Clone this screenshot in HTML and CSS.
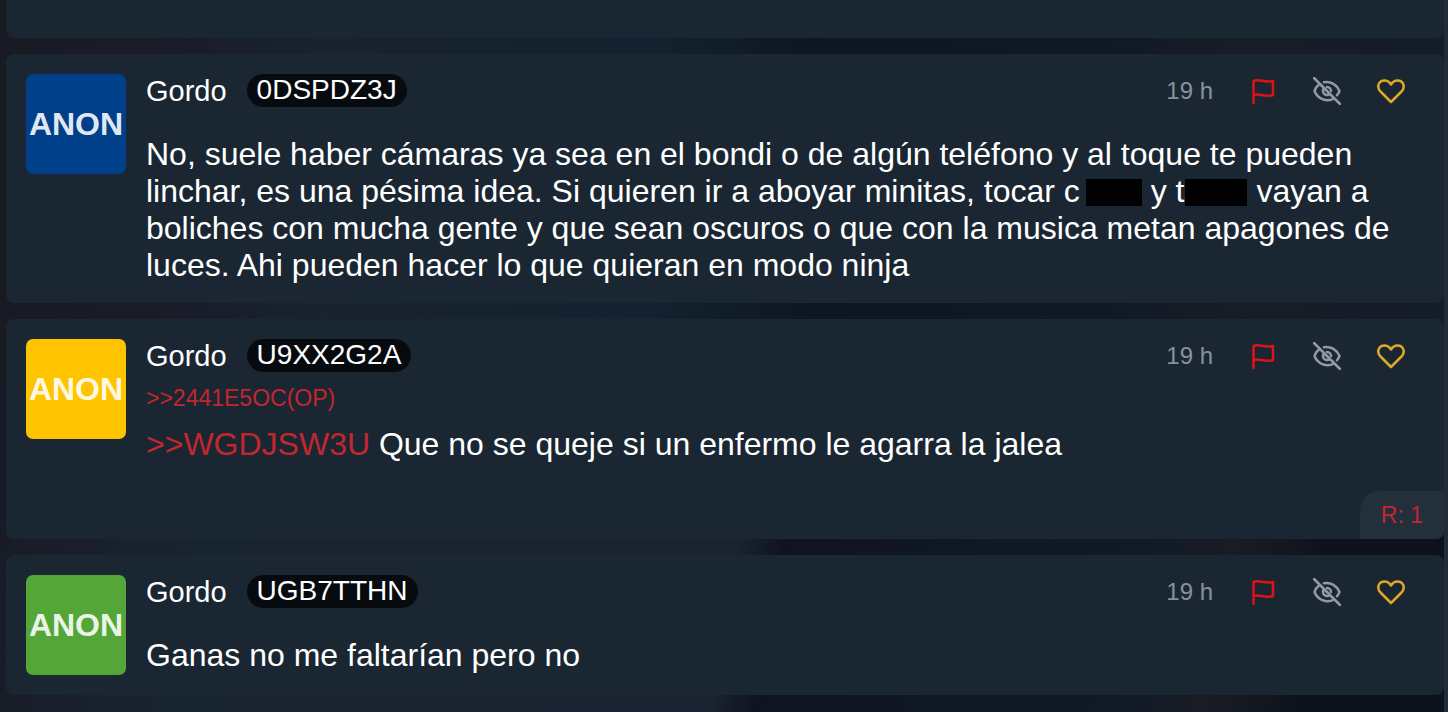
FILE: index.html
```html
<!DOCTYPE html>
<html lang="es">
<head>
<meta charset="UTF-8">
<meta name="viewport" content="width=device-width, initial-scale=1.0">
<title>Comentarios</title>
<link rel="stylesheet" href="styles.css">
</head>
<body>

<!-- Shared icons -->
<svg class="sprite" aria-hidden="true">
    <symbol id="flag" viewBox="0 0 28 28">
        <path d="M4.500 26V4C9.500 1 15.500 6.500 24 4V18C15.500 21 9.500 15.500 4.500 18"/>
    </symbol>
    <symbol id="hide" viewBox="0 0 28 28">
        <path d="M1 1L27 27M11 5.200C18 4 24 8 26.500 14C25.900 15.600 25 17 24 18.200M6 7.500C4 9 2.300 11.300 1.500 14C5 22.500 14 25.500 21 21.500M10.800 11.500C8.500 15 11.500 19.200 16 17.500M14 10C16.500 10 18 12 18 14"/>
    </symbol>
    <symbol id="heart" viewBox="0 0 28 28">
        <path d="M14 25L3.500 14.500C-1 9.500 2 3.500 7.500 3.500C10.500 3.500 12.500 5 14 7.500C15.500 5 17.500 3.500 20.500 3.500C26 3.500 29 9.500 24.500 14.500Z"/>
    </symbol>
</svg>

<main class="comments">
    <div class="comment comment-cut"></div>

    <article class="comment">
        <div class="comment-main">
            <div class="avatar blue">ANON</div>
            <div class="content">
                <header class="comment-header">
                    <span class="name">Gordo</span>
                    <span class="tag">0DSPDZ3J</span>
                    <div class="actions">
                        <time>19 h</time>
                        <button class="flag" aria-label="Denunciar"><svg><use href="#flag"/></svg></button>
                        <button class="hide" aria-label="Ocultar"><svg><use href="#hide"/></svg></button>
                        <button class="heart" aria-label="Me gusta"><svg><use href="#heart"/></svg></button>
                    </div>
                </header>
                <p class="text">No, suele haber cámaras ya sea en el bondi o de algún teléfono y al toque te pueden linchar, es una pésima idea. Si quieren ir a aboyar minitas, tocar c<span class="censored"></span> y t<span class="censored wide"></span> vayan a boliches con mucha gente y que sean oscuros o que con la musica metan apagones de luces. Ahi pueden hacer lo que quieran en modo ninja</p>
            </div>
        </div>
    </article>

    <article class="comment">
        <div class="comment-main">
            <div class="avatar yellow">ANON</div>
            <div class="content">
                <header class="comment-header">
                    <span class="name">Gordo</span>
                    <span class="tag">U9XX2G2A</span>
                    <div class="actions">
                        <time>19 h</time>
                        <button class="flag" aria-label="Denunciar"><svg><use href="#flag"/></svg></button>
                        <button class="hide" aria-label="Ocultar"><svg><use href="#hide"/></svg></button>
                        <button class="heart" aria-label="Me gusta"><svg><use href="#heart"/></svg></button>
                    </div>
                </header>
                <div class="refs"><a href="#">&gt;&gt;2441E5OC(OP)</a></div>
                <p class="text"><a href="#">&gt;&gt;WGDJSW3U</a> Que no se queje si un enfermo le agarra la jalea</p>
            </div>
        </div>
        <footer class="replies"><a href="#">R: 1</a></footer>
    </article>

    <article class="comment">
        <div class="comment-main">
            <div class="avatar green">ANON</div>
            <div class="content">
                <header class="comment-header">
                    <span class="name">Gordo</span>
                    <span class="tag">UGB7TTHN</span>
                    <div class="actions">
                        <time>19 h</time>
                        <button class="flag" aria-label="Denunciar"><svg><use href="#flag"/></svg></button>
                        <button class="hide" aria-label="Ocultar"><svg><use href="#hide"/></svg></button>
                        <button class="heart" aria-label="Me gusta"><svg><use href="#heart"/></svg></button>
                    </div>
                </header>
                <p class="text">Ganas no me faltarían pero no</p>
            </div>
        </div>
    </article>
</main>

</body>
</html>
```

FILE: styles.css
```css
* {
    box-sizing: border-box;
}

body {
    margin: 0;
    min-height: 100vh;
    border-right: 4px solid #222b3a;
    background:
        linear-gradient(100deg, #181a24, #192431 15%, #1a2331 51%, #0f1520 54%, #101a27 78%, #191c24 84%, #0d131d 90%) 0 100% / 100% 50% no-repeat,
        linear-gradient(90deg, #181a24, #1a1b27 10%, #182230 22%, #152130 45%, #0d1722 56%, #0f1825 75%, #171d26 85%, #141c29);
    color: #ffffff;
    font-family: "Liberation Sans", Arial, Helvetica, sans-serif;
    overflow: hidden;
}

.sprite {
    display: none;
}

a {
    color: #c2262e;
    text-decoration: none;
}

.comments {
    display: flex;
    flex-direction: column;
    gap: 16px;
    padding-left: 6px;
}

.comment {
    display: flex;
    flex-direction: column;
    background-color: #1a2733;
    border-radius: 8px;
    overflow: hidden;
}

/* Tail of the comment scrolled off the top */
.comment-cut {
    height: 38px;
    border-radius: 0 0 8px 8px;
}

.comment-main {
    display: flex;
    gap: 20px;
    padding: 20px 20px 19px;
}

.avatar {
    display: flex;
    flex: 0 0 100px;
    align-items: center;
    justify-content: center;
    height: 100px;
    border-radius: 7px;
    color: rgba(255, 255, 255, 0.9);
    font-size: 32px;
    font-weight: bold;
}

.blue {
    background-color: #00408a;
}

.yellow {
    background-color: #ffc400;
}

.green {
    background-color: #54a638;
}

.content {
    flex: 1;
    min-width: 0;
}

.comment-header {
    display: flex;
    align-items: center;
    gap: 20px;
    height: 33px;
    font-size: 28px;
    line-height: 32px;
}

.name {
    font-size: 29px;
}

.tag {
    padding: 0 10px 1px;
    border-radius: 17px;
    background-color: #070b0f;
}

.actions {
    display: flex;
    align-items: center;
    gap: 36px;
    margin-left: auto;
    padding-right: 19px;
}

.actions time {
    color: #87919b;
    font-size: 24px;
}

.actions button {
    display: flex;
    padding: 0;
    border: 0;
    background: none;
    cursor: pointer;
}

.actions svg {
    width: 28px;
    height: 28px;
    fill: none;
    stroke: currentColor;
    stroke-width: 2.5;
    stroke-linecap: round;
    stroke-linejoin: round;
}

.actions .flag {
    color: #e01218;
}

.actions .hide {
    color: #919aa3;
}

.actions .heart {
    color: #dea928;
}

.text {
    margin: 29px 0 0;
    font-size: 32px;
    line-height: 37px;
}

.refs {
    margin-top: 12px;
    font-size: 23px;
    line-height: 28px;
}

.refs + .text {
    margin-top: 14px;
}

.censored {
    display: inline-block;
    width: 56px;
    height: 27px;
    margin-left: 6px;
    background-color: #000000;
    vertical-align: -4px;
}

.wide {
    width: 62px;
    margin-left: 1px;
}

.replies {
    align-self: flex-end;
    margin-top: 9px;
    padding: 0 21px;
    border-radius: 20px 0 0 0;
    background-color: #242f3c;
    font-size: 23px;
    line-height: 48px;
}

.comment:last-child .comment-main {
    padding-bottom: 20px;
}
```
